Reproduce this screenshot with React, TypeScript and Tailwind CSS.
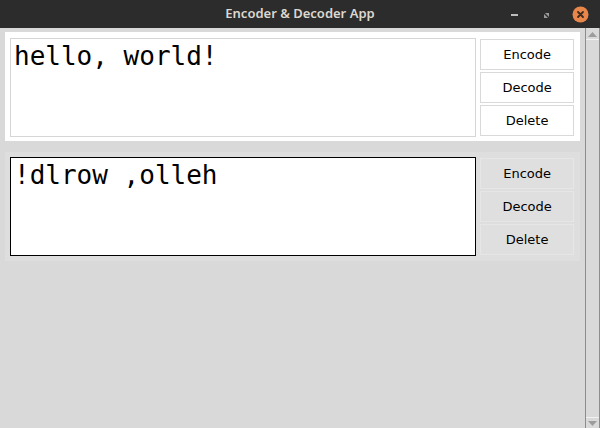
import React from "react";

const mono = { fontFamily: '"DejaVu Sans Mono", "Liberation Mono", monospace' };
const sans = { fontFamily: '"DejaVu Sans", "Noto Sans", sans-serif' };

function Btn({ label, active }: { label: string; active: boolean }) {
  return (
    <button
      className={
        "h-[31px] w-full border text-[13px] text-black flex items-center justify-center " +
        (active ? "bg-white border-[#d9d9d9]" : "bg-[#dfdfdf] border-[#e6e6e6]")
      }
      style={sans}
    >
      {label}
    </button>
  );
}

function Panel({ text, active }: { text: string; active: boolean }) {
  return (
    <div
      className={
        "flex w-[575px] h-[109px] pl-[5px] pr-[6px] " +
        (active ? "bg-white pt-[6px]" : "bg-[#dedede] pt-[5px]")
      }
    >
      <div
        className={
          "w-[467px] h-[99px] bg-white border px-[3px] text-[26px] leading-[30px] text-black " +
          (active ? "border-[#d6d6d6] pt-[2px]" : "border-black pt-[2px]")
        }
        style={mono}
      >
        {text}
      </div>
      <div className={"ml-[4px] w-[94px] flex flex-col gap-[2px] " + (active ? "pt-[1px]" : "pt-[1px]")}>
        <Btn label="Encode" active={active} />
        <Btn label="Decode" active={active} />
        <Btn label="Delete" active={active} />
      </div>
    </div>
  );
}

export default function App() {
  return (
    <div className="w-[600px] h-[428px] bg-[#d9d9d9] flex flex-col overflow-hidden">
      <div className="h-[28px] bg-[#2c2c2c] flex items-center relative">
        <div
          className="flex-1 text-center text-[13px] font-semibold text-[#dcd8d0]"
          style={{ fontFamily: '"Noto Sans", "DejaVu Sans", sans-serif' }}
        >
          Encoder &amp; Decoder App
        </div>
        <div className="absolute right-[11px] top-[6px] flex items-center gap-[17px]">
          <div className="w-[16px] h-[16px] flex items-center justify-center">
            <div className="w-[7px] h-[2px] bg-[#bdbdbd]" />
          </div>
          <svg width="16" height="16" viewBox="0 0 16 16">
            <path d="M6 6 L10 6 L10 10 Z" fill="#9a9a9a" />
            <path d="M5 7 L9 11 L5 11 Z" fill="#9a9a9a" />
          </svg>
          <svg width="17" height="17" viewBox="0 0 17 17">
            <circle cx="8.5" cy="8.5" r="8" fill="#e9874a" />
            <path d="M6 6 L11 11 M11 6 L6 11" stroke="#3a2a20" strokeWidth="1.8" strokeLinecap="round" />
          </svg>
        </div>
      </div>
      <div className="flex flex-1">
        <div className="flex-1 pl-[5px] pt-[4px] flex flex-col gap-[11px]">
          <Panel text="hello, world!" active={true} />
          <Panel text="!dlrow ,olleh" active={false} />
        </div>
        <div className="w-[15px] flex flex-col border-l border-r border-[#8c8c8c] bg-[#d9d9d9]">
          <div className="h-[11px] mt-[1px] flex items-center justify-center border-b border-[#f2f2f2]">
            <svg width="9" height="5" viewBox="0 0 9 5">
              <path d="M0 5 L4.5 0 L9 5 Z" fill="#9c9c9c" />
            </svg>
          </div>
          <div className="flex-1" />
          <div className="h-[11px] flex items-center justify-center border-t border-[#f2f2f2]">
            <svg width="9" height="5" viewBox="0 0 9 5">
              <path d="M0 0 L9 0 L4.5 5 Z" fill="#9c9c9c" />
            </svg>
          </div>
        </div>
      </div>
    </div>
  );
}
